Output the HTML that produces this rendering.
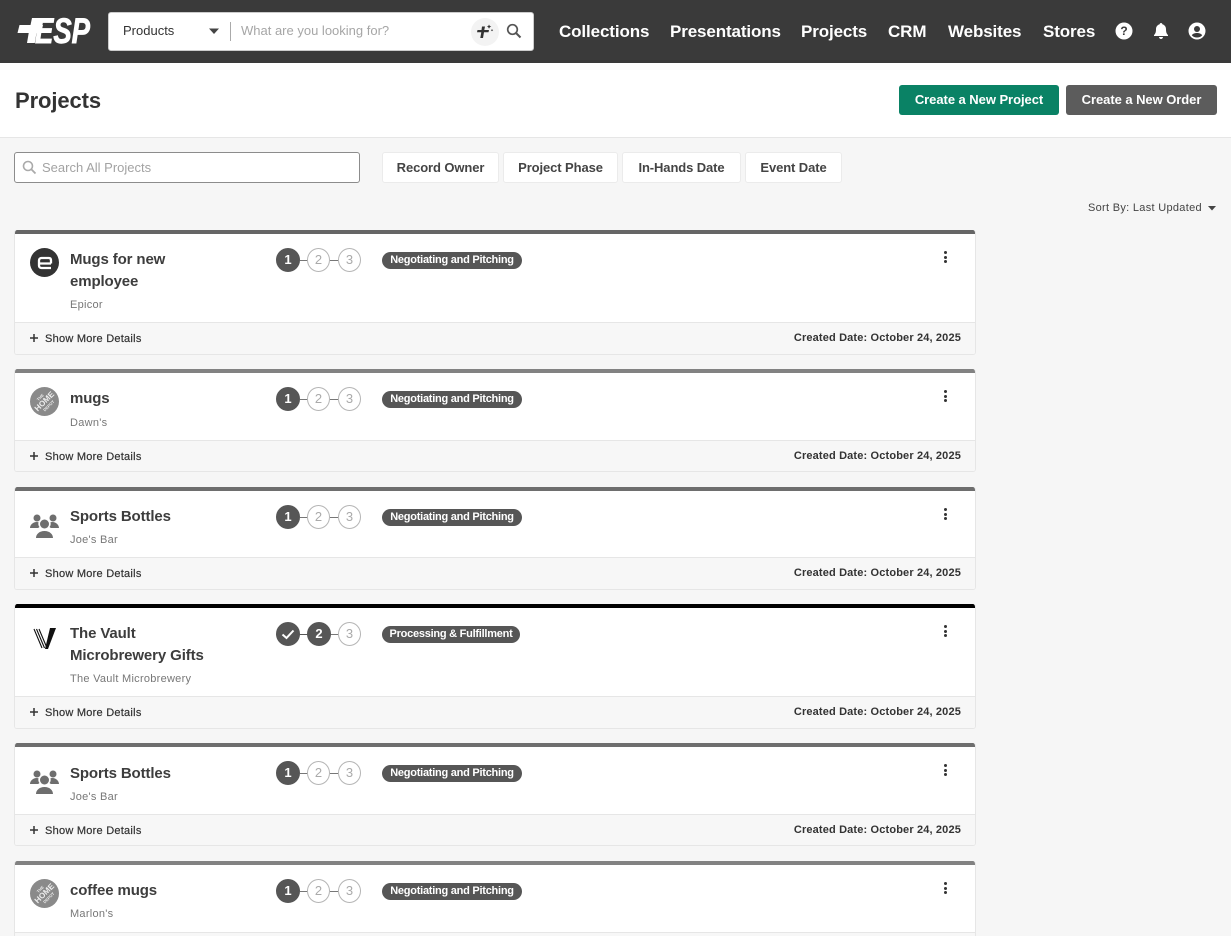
<!DOCTYPE html>
<html lang="en">
<head>
<meta charset="utf-8">
<title>Projects</title>
<style>
*{box-sizing:border-box}
html,body{margin:0;padding:0;width:1231px;height:936px;overflow:hidden}
body{background:#f6f6f6;font-family:"Liberation Sans",sans-serif;color:#333;position:relative}
.a{position:absolute;white-space:nowrap}
#nav{left:0;top:0;width:1231px;height:63px;background:#3a3a3a}
.nl{top:22px;font-size:17px;line-height:20px;font-weight:700;color:#fff;letter-spacing:-.12px}
#sb{left:108px;top:12px;width:426px;height:39px;background:#fff;border:1px solid #ccc;border-radius:3px}
#head{left:0;top:63px;width:1231px;height:75px;background:#fff;border-bottom:1px solid #e6e6e6}
.btn{top:85px;height:30px;border-radius:3px;color:#fff;font-size:13px;font-weight:700;line-height:29px;text-align:center;letter-spacing:-.05px}
.flt{top:152px;height:31px;background:#fff;border:1px solid #ebebeb;border-radius:3px;font-size:13px;font-weight:700;line-height:29px;text-align:center;color:#444;letter-spacing:-.1px}
.card{position:absolute;left:14px;width:962px;background:#fff;border:1px solid #e6e6e6;border-top:0;border-radius:3px;overflow:hidden}
.bar{position:absolute;left:-1px;right:-1px;top:0;height:4px}
.t{position:absolute;left:55px;top:19px;font-size:15px;line-height:22px;font-weight:700;color:#3d3d3d;white-space:nowrap;letter-spacing:-.12px}
.s{position:absolute;left:55px;font-size:11px;line-height:14px;color:#777;white-space:nowrap;letter-spacing:.27px}
.c{position:absolute;top:18px;width:23px;height:24px;border-radius:50%;font-size:13px;line-height:22px;text-align:center;border:1px solid #b5b5b5;background:#fff;color:#aaa}
.c.on{background:#565656;border-color:#565656;color:#fff;font-weight:700;width:24px}
.ln{position:absolute;top:30px;height:1px;width:8px;background:#777}
.pill{position:absolute;left:367px;top:22px;height:17px;border-radius:9px;background:#565656;color:#fff;font-size:11px;font-weight:700;line-height:16px;text-align:center;white-space:nowrap;letter-spacing:-.25px}
.dots{position:absolute;left:929px;top:21px;width:3px;height:12px}
.dots i{display:block;width:3px;height:3px;border-radius:50%;background:#333;margin-bottom:1.5px}
.foot{position:absolute;left:0;right:0;bottom:0;height:32px;background:#f7f7f7;border-top:1px solid #e6e6e6}
.more{position:absolute;left:30px;top:9px;font-size:11px;line-height:14px;color:#333;white-space:nowrap;letter-spacing:.25px;-webkit-text-stroke:.2px #333}
.plus{position:absolute;left:15px;top:11px}
.date{position:absolute;right:14px;top:8px;font-size:11px;line-height:14px;font-weight:700;color:#333;white-space:nowrap;letter-spacing:.15px}
.av{position:absolute;left:15px;top:18px}
</style>
</head>
<body>
<div class="a" id="nav"></div>

<svg class="a" style="left:15px;top:15px" width="78" height="31" viewBox="0 0 78 31">
<text x="20" y="28" font-family="Liberation Sans" font-size="35" font-weight="700" font-style="italic" fill="#fff" textLength="55" lengthAdjust="spacingAndGlyphs" stroke="#fff" stroke-width=".9">ESP</text>
<path d="M17 3H25L23.300 10H28L26.200 18H21.500L19.800 28H12L13.700 18H2.500L4.500 10H15.500Z" fill="#fff"/>
</svg>

<div class="a" id="sb"></div>
<div class="a" style="left:123px;top:23px;font-size:13px;line-height:16px;color:#333">Products</div>
<svg class="a" style="left:209px;top:28px" width="11" height="7"><path d="M0 .5H10L5 6Z" fill="#444"/></svg>
<div class="a" style="left:230px;top:22px;width:1px;height:19px;background:#aaa"></div>
<div class="a" style="left:241px;top:23px;font-size:13px;line-height:16px;color:#a6a6a6">What are you looking for?</div>
<div class="a" style="left:471px;top:18px;width:28px;height:28px;border-radius:50%;background:#f3f3f3"></div>
<svg class="a" style="left:476px;top:23px" width="18" height="18" viewBox="0 0 18 18"><path d="M6 3.500H9L8.300 7H13L12.500 9.300H8L7 15H4.300L5.300 9.300H1L1.500 7H5.500Z" fill="#333"/><path d="M13 1.500l.8 1.500 1.500.6-1.500.7-.8 1.500-.7-1.500-1.400-.7 1.400-.6zM16 6l.4.8.8.4-.8.4-.4.8-.4-.8-.8-.4.800-.4z" fill="#333"/></svg>
<svg class="a" style="left:506px;top:23px" width="16" height="16" viewBox="0 0 16 16"><circle cx="6.500" cy="6.500" r="4.800" fill="none" stroke="#555" stroke-width="1.700"/><path d="M10 10l4.500 4.500" stroke="#555" stroke-width="2"/></svg>

<div class="a nl" style="left:559px">Collections</div>
<div class="a nl" style="left:670px">Presentations</div>
<div class="a nl" style="left:801px">Projects</div>
<div class="a nl" style="left:888px">CRM</div>
<div class="a nl" style="left:948px">Websites</div>
<div class="a nl" style="left:1043px">Stores</div>

<svg class="a" style="left:1115px;top:22px" width="18" height="18" viewBox="0 0 18 18"><circle cx="9" cy="9" r="8.500" fill="#fff"/><text x="9" y="13.200" text-anchor="middle" font-family="Liberation Sans" font-size="12" font-weight="700" fill="#3a3a3a">?</text></svg>
<svg class="a" style="left:1152px;top:22px" width="18" height="18" viewBox="0 0 18 18"><path d="M9 1c.8 0 1.300.5 1.300 1.200C12.700 2.800 14 4.800 14 7.200c0 3.300.8 4.600 2 5.800v1H2v-1c1.200-1.200 2-2.500 2-5.800C4 4.800 5.300 2.800 7.700 2.200 7.700 1.500 8.200 1 9 1zM7 15h4c0 1.100-.9 2-2 2s-2-.9-2-2z" fill="#fff"/></svg>
<svg class="a" style="left:1188px;top:22px" width="18" height="18" viewBox="0 0 18 18"><circle cx="9" cy="9" r="8.500" fill="#fff"/><circle cx="9" cy="7" r="3" fill="#3a3a3a"/><path d="M3.800 13.200C5 11.500 7 11 9 11s4 .5 5.200 2.200C13 14.800 11 15.500 9 15.500s-4-.7-5.200-2.300z" fill="#3a3a3a"/></svg>

<div class="a" id="head"></div>
<div class="a" style="left:15px;top:88px;font-size:22px;line-height:26px;font-weight:700;color:#333;letter-spacing:-.1px">Projects</div>
<div class="a btn" style="left:899px;width:160px;background:#0a8265">Create a New Project</div>
<div class="a btn" style="left:1066px;width:151px;background:#5c5c5c">Create a New Order</div>

<div class="a" style="left:14px;top:152px;width:346px;height:31px;background:#fff;border:1px solid #8c8c8c;border-radius:3px"></div>
<svg class="a" style="left:22px;top:160px" width="15" height="15" viewBox="0 0 15 15"><circle cx="6" cy="6" r="4.500" fill="none" stroke="#aaa" stroke-width="1.600"/><path d="M9.300 9.300l4.200 4.200" stroke="#aaa" stroke-width="1.800"/></svg>
<div class="a" style="left:42px;top:160px;font-size:13px;line-height:16px;color:#a3a3a3">Search All Projects</div>

<div class="a flt" style="left:382px;width:117px">Record Owner</div>
<div class="a flt" style="left:503px;width:115px">Project Phase</div>
<div class="a flt" style="left:622px;width:119px">In-Hands Date</div>
<div class="a flt" style="left:745px;width:97px">Event Date</div>

<div class="a" style="left:1088px;top:201px;font-size:11px;line-height:14px;color:#444;letter-spacing:.3px">Sort By: Last Updated</div>
<svg class="a" style="left:1208px;top:206px" width="9" height="5"><path d="M0 0H8L4 4.500Z" fill="#444"/></svg>

<!-- Card 1 -->
<div class="card" style="top:230px;height:125px">
  <div class="bar" style="background:#666"></div>
  <svg class="av" width="29" height="29" viewBox="0 0 29 29"><circle cx="14.500" cy="14.500" r="14.500" fill="#333"/><path d="M21 15.500H9V17.500C9 19 10 20 11.500 20H21M9 15.500V12.500C9 11 10 10 11.500 10H19C20.500 10 21 11 21 12.500V15.500" fill="none" stroke="#fff" stroke-width="2.300"/></svg>
  <div class="t">Mugs for new<br>employee</div>
  <div class="s" style="top:68px">Epicor</div>
  <div class="c on" style="left:261px">1</div><div class="ln" style="left:285px"></div>
  <div class="c" style="left:292px">2</div><div class="ln" style="left:315px"></div>
  <div class="c" style="left:323px">3</div>
  <div class="pill" style="width:140px">Negotiating and Pitching</div>
  <div class="dots"><i></i><i></i><i></i></div>
  <div class="foot">
    <svg class="plus" width="8" height="8"><path d="M4 0V8M0 4H8" stroke="#333" stroke-width="1.500"/></svg>
    <div class="more">Show More Details</div>
    <div class="date">Created Date: October 24, 2025</div>
  </div>
</div>

<!-- Card 2 -->
<div class="card" style="top:369px;height:103px">
  <div class="bar" style="background:#828282"></div>
  <svg class="av" width="29" height="29" viewBox="0 0 29 29"><circle cx="14.500" cy="14.500" r="14.500" fill="#8a8a8a"/><g transform="rotate(-45 14.500 14.500)" fill="#eee" font-family="Liberation Sans" font-weight="700" text-anchor="middle"><text x="14.500" y="10" font-size="4">THE</text><text x="14.500" y="17" font-size="8">HOME</text><text x="14.500" y="22" font-size="4">DEPOT</text></g></svg>
  <div class="t">mugs</div>
  <div class="s" style="top:47px">Dawn's</div>
  <div class="c on" style="left:261px">1</div><div class="ln" style="left:285px"></div>
  <div class="c" style="left:292px">2</div><div class="ln" style="left:315px"></div>
  <div class="c" style="left:323px">3</div>
  <div class="pill" style="width:140px">Negotiating and Pitching</div>
  <div class="dots"><i></i><i></i><i></i></div>
  <div class="foot" style="height:31px">
    <svg class="plus" width="8" height="8"><path d="M4 0V8M0 4H8" stroke="#333" stroke-width="1.500"/></svg>
    <div class="more">Show More Details</div>
    <div class="date">Created Date: October 24, 2025</div>
  </div>
</div>

<!-- Card 3 -->
<div class="card" style="top:487px;height:103px">
  <div class="bar" style="background:#6e6e6e"></div>
  <svg class="av" style="top:26px" width="30" height="26" viewBox="0 0 30 26"><g fill="#6e6e6e"><circle cx="7" cy="5" r="3.500"/><circle cx="23" cy="5" r="3.500"/><circle cx="14.500" cy="11" r="4.500"/><path d="M0 15c0-3 3-6 6.500-6 1 0 1.500.1 2 .3-.5 2 0 3.700 1 4.700-.5.300-1 .6-1.300 1zM29 15c0-3-3-6-6.500-6-1 0-1.500.1-2 .3.500 2 0 3.700-1 4.700.5.300 1 .6 1.300 1zM6 25c0-3.500 3-7 8.500-7s8.500 3.500 8.500 7z"/></g></svg>
  <div class="t">Sports Bottles</div>
  <div class="s" style="top:46px">Joe's Bar</div>
  <div class="c on" style="left:261px">1</div><div class="ln" style="left:285px"></div>
  <div class="c" style="left:292px">2</div><div class="ln" style="left:315px"></div>
  <div class="c" style="left:323px">3</div>
  <div class="pill" style="width:140px">Negotiating and Pitching</div>
  <div class="dots"><i></i><i></i><i></i></div>
  <div class="foot">
    <svg class="plus" width="8" height="8"><path d="M4 0V8M0 4H8" stroke="#333" stroke-width="1.500"/></svg>
    <div class="more">Show More Details</div>
    <div class="date">Created Date: October 24, 2025</div>
  </div>
</div>

<!-- Card 4 -->
<div class="card" style="top:604px;height:125px">
  <div class="bar" style="background:#000"></div>
  <svg class="av" style="top:23px;left:18px" width="24" height="24" viewBox="0 0 24 24"><path d="M12 22L17 1H23L15 22Z" fill="#111"/><path d="M1 2l8 19M3.500 2l8 19M6 2l8 19" stroke="#111" stroke-width="1.100" fill="none"/></svg>
  <div class="t">The Vault<br>Microbrewery Gifts</div>
  <div class="s" style="top:68px">The Vault Microbrewery</div>
  <div class="c on" style="left:261px"><svg width="14" height="22" viewBox="0 0 14 22" style="display:block;margin:0 auto"><path d="M1.500 11.500L5.500 15L12.500 7.500" fill="none" stroke="#fff" stroke-width="2"/></svg></div><div class="ln" style="left:285px;background:#565656"></div>
  <div class="c on" style="left:292px">2</div><div class="ln" style="left:316px;width:7px"></div>
  <div class="c" style="left:323px">3</div>
  <div class="pill" style="width:138px">Processing &amp; Fulfillment</div>
  <div class="dots"><i></i><i></i><i></i></div>
  <div class="foot">
    <svg class="plus" width="8" height="8"><path d="M4 0V8M0 4H8" stroke="#333" stroke-width="1.500"/></svg>
    <div class="more">Show More Details</div>
    <div class="date">Created Date: October 24, 2025</div>
  </div>
</div>

<!-- Card 5 -->
<div class="card" style="top:743px;height:103px">
  <div class="bar" style="background:#6e6e6e"></div>
  <svg class="av" style="top:26px" width="30" height="26" viewBox="0 0 30 26"><g fill="#6e6e6e"><circle cx="7" cy="5" r="3.500"/><circle cx="23" cy="5" r="3.500"/><circle cx="14.500" cy="11" r="4.500"/><path d="M0 15c0-3 3-6 6.500-6 1 0 1.500.1 2 .3-.5 2 0 3.700 1 4.700-.5.300-1 .6-1.300 1zM29 15c0-3-3-6-6.500-6-1 0-1.500.1-2 .3.500 2 0 3.700-1 4.700.5.300 1 .6 1.300 1zM6 25c0-3.500 3-7 8.500-7s8.500 3.500 8.500 7z"/></g></svg>
  <div class="t" style="top:20px">Sports Bottles</div>
  <div class="s" style="top:47px">Joe's Bar</div>
  <div class="c on" style="left:261px">1</div><div class="ln" style="left:285px"></div>
  <div class="c" style="left:292px">2</div><div class="ln" style="left:315px"></div>
  <div class="c" style="left:323px">3</div>
  <div class="pill" style="width:140px">Negotiating and Pitching</div>
  <div class="dots"><i></i><i></i><i></i></div>
  <div class="foot" style="height:31px">
    <svg class="plus" width="8" height="8"><path d="M4 0V8M0 4H8" stroke="#333" stroke-width="1.500"/></svg>
    <div class="more">Show More Details</div>
    <div class="date">Created Date: October 24, 2025</div>
  </div>
</div>

<!-- Card 6 -->
<div class="card" style="top:861px;height:75px;border-bottom:0;border-radius:3px 3px 0 0">
  <div class="bar" style="background:#828282"></div>
  <svg class="av" width="29" height="29" viewBox="0 0 29 29"><circle cx="14.500" cy="14.500" r="14.500" fill="#8a8a8a"/><g transform="rotate(-45 14.500 14.500)" fill="#eee" font-family="Liberation Sans" font-weight="700" text-anchor="middle"><text x="14.500" y="10" font-size="4">THE</text><text x="14.500" y="17" font-size="8">HOME</text><text x="14.500" y="22" font-size="4">DEPOT</text></g></svg>
  <div class="t">coffee mugs</div>
  <div class="s" style="top:46px">Marlon's</div>
  <div class="c on" style="left:261px">1</div><div class="ln" style="left:285px"></div>
  <div class="c" style="left:292px">2</div><div class="ln" style="left:315px"></div>
  <div class="c" style="left:323px">3</div>
  <div class="pill" style="width:140px">Negotiating and Pitching</div>
  <div class="dots"><i></i><i></i><i></i></div>
  <div class="foot" style="height:4px"></div>
</div>
</body>
</html>
